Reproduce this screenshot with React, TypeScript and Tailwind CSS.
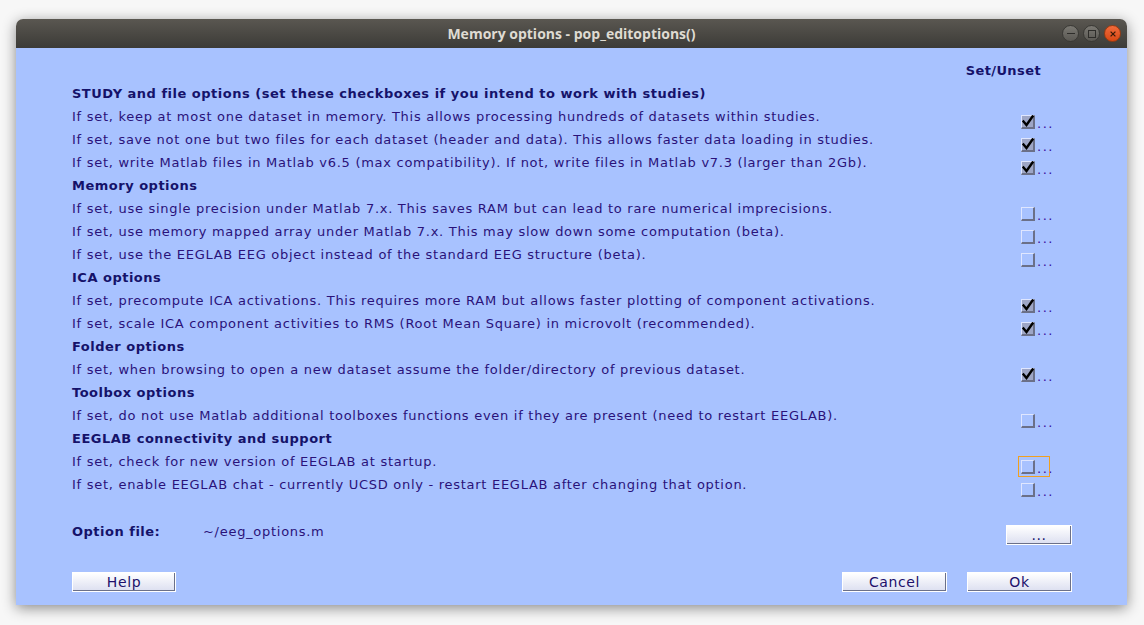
import React from "react";

type Row =
  | { kind: "h"; text: string }
  | { kind: "o"; text: string; checked: boolean; focus?: boolean };

const rows: Row[] = [
  { kind: "h", text: "STUDY and file options (set these checkboxes if you intend to work with studies)" },
  { kind: "o", text: "If set, keep at most one dataset in memory. This allows processing hundreds of datasets within studies.", checked: true },
  { kind: "o", text: "If set, save not one but two files for each dataset (header and data). This allows faster data loading in studies.", checked: true },
  { kind: "o", text: "If set, write Matlab files in Matlab v6.5 (max compatibility). If not, write files in Matlab v7.3 (larger than 2Gb).", checked: true },
  { kind: "h", text: "Memory options" },
  { kind: "o", text: "If set, use single precision under Matlab 7.x. This saves RAM but can lead to rare numerical imprecisions.", checked: false },
  { kind: "o", text: "If set, use memory mapped array under Matlab 7.x. This may slow down some computation (beta).", checked: false },
  { kind: "o", text: "If set, use the EEGLAB EEG object instead of the standard EEG structure (beta).", checked: false },
  { kind: "h", text: "ICA options" },
  { kind: "o", text: "If set, precompute ICA activations. This requires more RAM but allows faster plotting of component activations.", checked: true },
  { kind: "o", text: "If set, scale ICA component activities to RMS (Root Mean Square) in microvolt (recommended).", checked: true },
  { kind: "h", text: "Folder options" },
  { kind: "o", text: "If set, when browsing to open a new dataset assume the folder/directory of previous dataset.", checked: true },
  { kind: "h", text: "Toolbox options" },
  { kind: "o", text: "If set, do not use Matlab additional toolboxes functions even if they are present (need to restart EEGLAB).", checked: false },
  { kind: "h", text: "EEGLAB connectivity and support" },
  { kind: "o", text: "If set, check for new version of EEGLAB at startup.", checked: false, focus: true },
  { kind: "o", text: "If set, enable EEGLAB chat - currently UCSD only - restart EEGLAB after changing that option.", checked: false },
];

const font = { fontFamily: '"DejaVu Sans", "Liberation Sans", sans-serif' };

function Box({ checked, focus }: { checked: boolean; focus?: boolean }) {
  return (
    <div
      className={
        "flex items-center h-[21px] w-[32px] pl-[2px] -ml-[3px] mt-[6px] " +
        (focus ? "border border-[#f0a020]" : "border border-transparent")
      }
    >
      <div
        className={
          "relative shrink-0 w-[14px] h-[14px] border-t border-l border-t-[#dfe6ff] border-l-[#dfe6ff] border-b-2 border-r-2 border-b-[#6b7088] border-r-[#6b7088] " +
          (checked ? "bg-[#9ea6c6]" : "bg-[#a8c2ff]")
        }
      >
        {checked && (
          <svg viewBox="0 0 12 12" className="absolute left-[0px] top-[-1px] w-[12px] h-[12px]">
            <path d="M1.5 6.5 L4.5 10 L10.5 1.5" fill="none" stroke="#000" strokeWidth="2.4" strokeLinecap="square" />
          </svg>
        )}
      </div>
      <span className="shrink-0 ml-[2px] text-[13px] leading-none text-[#3a10a0] tracking-[1.5px] translate-y-[2px]">...</span>
    </div>
  );
}

function Btn({ label, w }: { label: string; w: string }) {
  return (
    <div
      className={
        w +
        " h-[20px] flex items-center justify-center border border-white bg-gradient-to-b from-[#ffffff] to-[#dcdff0] text-[14px] text-[#20106a] tracking-[0.6px] shadow-[inset_-1px_-1px_0_#6b7088]"
      }
    >
      {label}
    </div>
  );
}

export default function App() {
  return (
    <div className="w-[1144px] h-[625px] bg-[#f7f7f7] relative overflow-hidden" style={font}>
      <div className="absolute left-[16px] top-[19px] w-[1111px] h-[586px] flex flex-col rounded-t-[7px] overflow-hidden shadow-[0_3px_14px_rgba(0,0,0,0.45)]">
        <div className="h-[29px] shrink-0 bg-gradient-to-b from-[#5a5751] to-[#3c3b37] flex items-center relative">
          <div
            className="flex-1 text-center text-[14px] font-bold text-[#dfdbd2]"
            style={{ fontFamily: '"Open Sans", "Noto Sans", sans-serif' }}
          >
            Memory options - pop_editoptions()
          </div>
          <div className="absolute right-[6px] top-[6px] flex gap-[4px]">
            <div className="w-[17px] h-[17px] rounded-full bg-gradient-to-b from-[#7a7872] to-[#5a5853] border border-[#3a3935] flex items-center justify-center">
              <div className="w-[8px] h-[1.5px] bg-[#2e2d2a]" />
            </div>
            <div className="w-[17px] h-[17px] rounded-full bg-gradient-to-b from-[#7a7872] to-[#5a5853] border border-[#3a3935] flex items-center justify-center">
              <div className="w-[8px] h-[8px] border-[1.5px] border-[#2e2d2a]" />
            </div>
            <div className="w-[17px] h-[17px] rounded-full bg-gradient-to-b from-[#f06a3a] to-[#d94812] border border-[#9a3a10] flex items-center justify-center">
              <svg viewBox="0 0 10 10" className="w-[8px] h-[8px]">
                <path d="M2 2 L8 8 M8 2 L2 8" stroke="#3a1a08" strokeWidth="1.6" />
              </svg>
            </div>
          </div>
        </div>
        <div className="flex-1 bg-[#a8c2ff] pl-[56px] pr-[55px] pt-[11px] flex flex-col">
          <div className="h-[23px] flex items-center justify-end pr-[31px]">
            <span className="text-[13px] font-bold text-[#15126a] tracking-[0.4px]">Set/Unset</span>
          </div>
          {rows.map((r, i) => (
            <div key={i} className="h-[23px] flex items-start">
              <div
                className={
                  "flex-1 h-[23px] flex items-center text-[13px] whitespace-nowrap " +
                  (r.kind === "h"
                    ? "font-bold text-[#15126a] tracking-[0.5px]"
                    : "text-[#2a127a] tracking-[0.72px]")
                }
              >
                {r.text}
              </div>
              <div className="w-[51px] h-[23px] shrink-0">
                {r.kind === "o" && <Box checked={r.checked} focus={r.focus} />}
              </div>
            </div>
          ))}
          <div className="mt-[26px] h-[20px] flex items-center">
            <div className="w-[131px] text-[13px] font-bold text-[#15126a] tracking-[0.5px]">Option file:</div>
            <div className="flex-1 text-[13px] text-[#2a127a] tracking-[0.72px]">~/eeg_options.m</div>
            <div className="translate-y-[3px]">
              <Btn label="..." w="w-[66px]" />
            </div>
          </div>
          <div className="mt-[30px] flex items-center">
            <Btn label="Help" w="w-[104px]" />
            <div className="flex-1" />
            <Btn label="Cancel" w="w-[105px]" />
            <div className="w-[20px]" />
            <Btn label="Ok" w="w-[105px]" />
          </div>
        </div>
      </div>
    </div>
  );
}
